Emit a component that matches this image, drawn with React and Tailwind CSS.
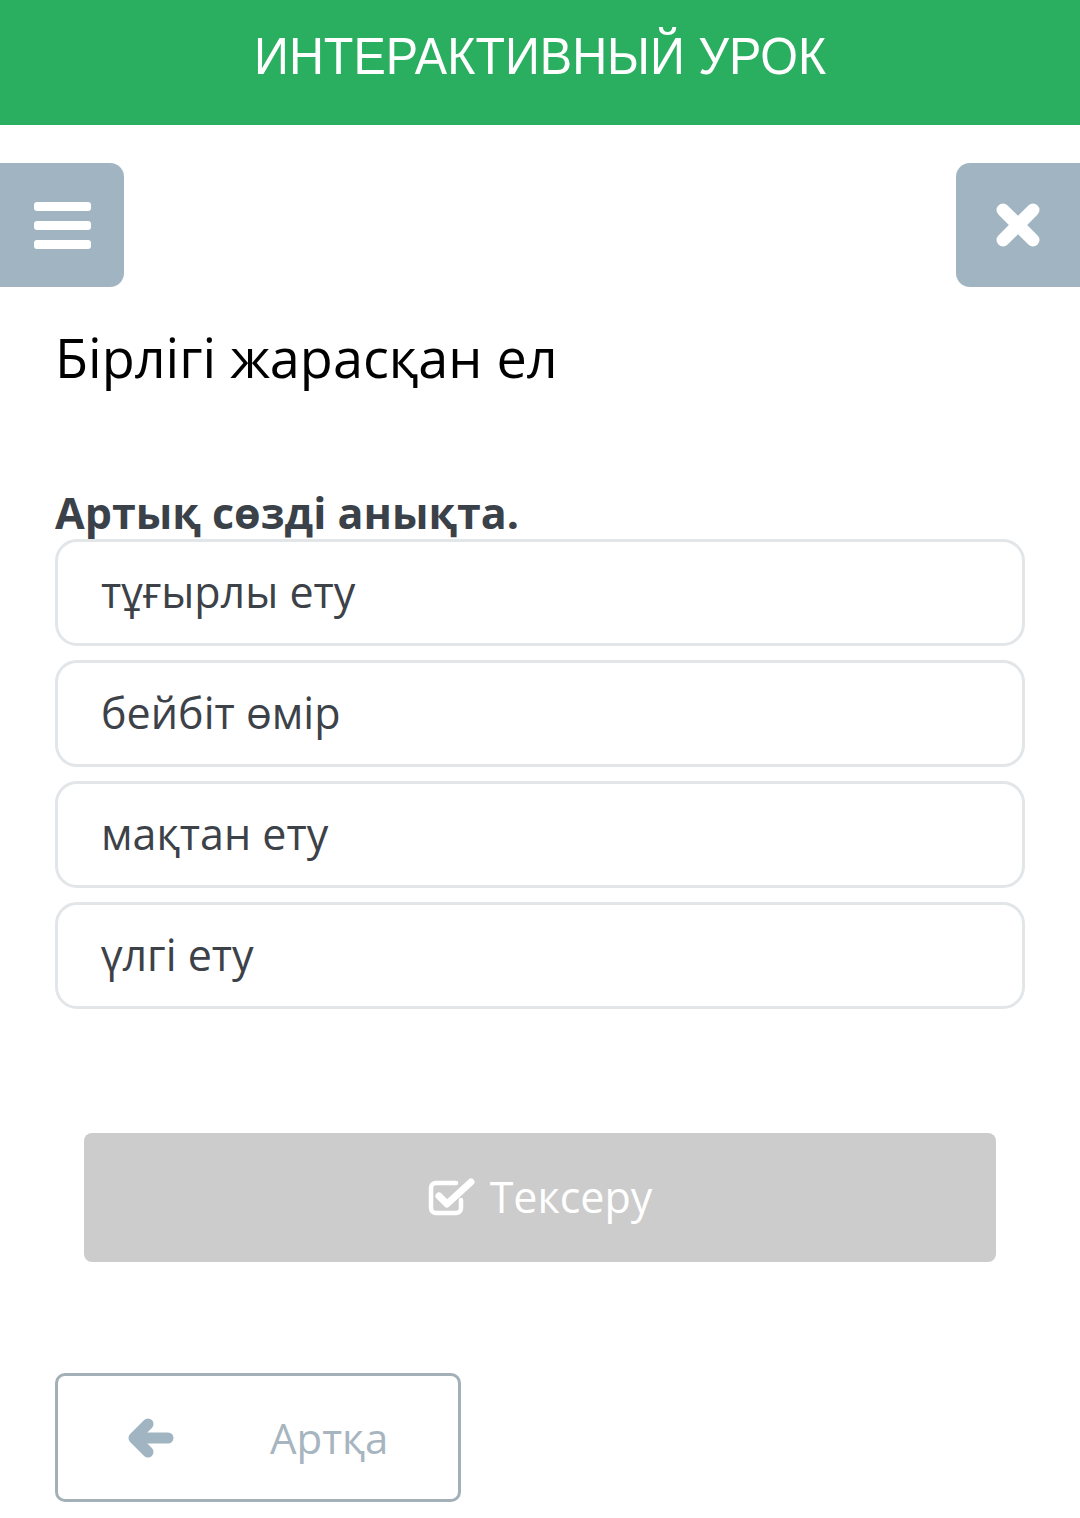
const options = ["тұғырлы ету", "бейбіт өмір", "мақтан ету", "үлгі ету"];

const CheckSquare = () => (
  <svg viewBox="0 0 48 40" className="w-[48px] h-[40px]" fill="none">
    <path
      d="M33 22v8a5 5 0 0 1-5 5H8a5 5 0 0 1-5-5V10a5 5 0 0 1 5-5h20"
      stroke="white"
      strokeWidth="4.5"
      strokeLinecap="round"
    />
    <path
      d="M11 18l8 8L43 4"
      stroke="white"
      strokeWidth="7"
      strokeLinecap="round"
      strokeLinejoin="round"
    />
  </svg>
);

const Bars = () => (
  <svg viewBox="0 0 57 47" className="w-[57px] h-[47px]" fill="white">
    <rect x="0" y="0" width="57" height="9" rx="3" />
    <rect x="0" y="19" width="57" height="9" rx="3" />
    <rect x="0" y="38" width="57" height="9" rx="3" />
  </svg>
);

const Cross = () => (
  <svg viewBox="0 0 46 44" className="w-[46px] h-[44px]" fill="none">
    <path d="M8 7l30 30M38 7L8 37" stroke="white" strokeWidth="13" strokeLinecap="round" />
  </svg>
);

const ArrowLeft = () => (
  <svg viewBox="0 0 46 40" className="w-[46px] h-[40px]" fill="none">
    <path d="M40 20H12" stroke="#a0b4c2" strokeWidth="11" strokeLinecap="round" />
    <path
      d="M20 6L6 20l14 14"
      stroke="#a0b4c2"
      strokeWidth="11"
      strokeLinecap="round"
      strokeLinejoin="round"
    />
  </svg>
);

export default function App() {
  return (
    <div className="min-h-[1518px] bg-white font-['Open_Sans',sans-serif]">
      {/* Header */}
      <div className="h-[125px] bg-[#2aae60] flex items-center justify-center">
        <h1 className="text-white text-[51px] font-['Liberation_Sans',sans-serif] scale-x-[0.95] -mt-[10px] whitespace-nowrap">
          ИНТЕРАКТИВНЫЙ УРОК
        </h1>
      </div>

      {/* Top buttons */}
      <div className="mt-[38px] flex justify-between">
        <button className="w-[124px] h-[124px] bg-[#a0b4c2] rounded-r-[14px] flex items-center justify-center">
          <Bars />
        </button>
        <button className="w-[124px] h-[124px] bg-[#a0b4c2] rounded-l-[14px] flex items-center justify-center">
          <Cross />
        </button>
      </div>

      <div className="px-[55px]">
        <h2 className="mt-[34px] text-[54px] leading-[72px] text-black">Бірлігі жарасқан ел</h2>

        <p className="mt-[90px] text-[43px] leading-[60px] font-bold text-[#3a4149]">
          Артық сөзді анықта.
        </p>

        <div className="mt-[-4px] flex flex-col gap-[14px] w-[970px]">
          {options.map((o) => (
            <div
              key={o}
              className="h-[107px] border-[3px] border-[#e3e6e8] rounded-[22px] flex items-center pl-[43px] text-[43px] text-[#3d4148]"
            >
              <span>{o}</span>
            </div>
          ))}
        </div>

        {/* Check button */}
        <div className="mt-[124px] px-[29px]">
          <button className="w-[912px] h-[129px] bg-[#cccccc] rounded-[8px] flex items-center justify-center gap-[14px] text-white text-[43px]">
            <CheckSquare />
            <span>Тексеру</span>
          </button>
        </div>

        {/* Back button */}
        <button className="mt-[111px] w-[406px] h-[129px] border-[3px] border-[#a3b0b8] rounded-[10px] flex items-center pl-[70px]">
          <ArrowLeft />
          <span className="ml-[96px] text-[42px] text-[#a6b5c0]">Артқа</span>
        </button>
      </div>
    </div>
  );
}
